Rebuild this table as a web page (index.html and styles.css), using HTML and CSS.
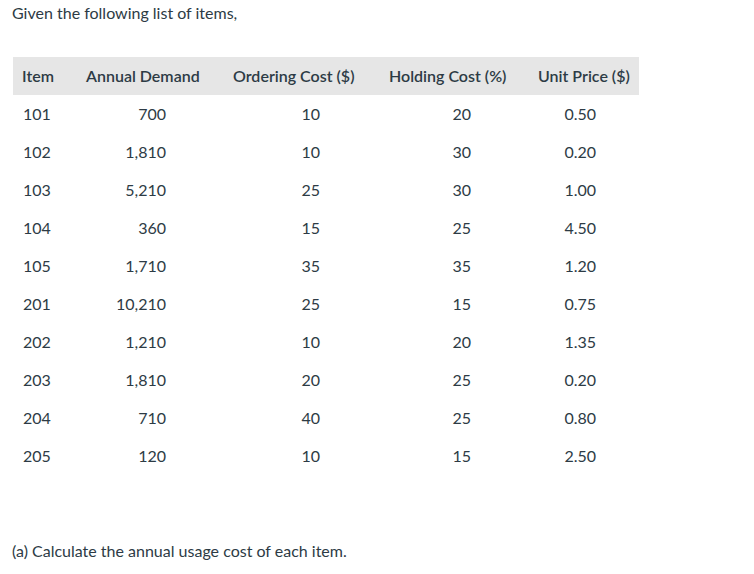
FILE: index.html
```html
<!DOCTYPE html>
<html>
<head>
<meta charset="utf-8">
<link rel="stylesheet" href="styles.css">
</head>
<body>
<div class="page">
  <p class="intro">Given the following list of items,</p>
  <table class="items">
    <colgroup>
      <col class="c1"><col class="c2"><col class="c3"><col class="c4"><col class="c5">
    </colgroup>
    <thead>
      <tr><th>Item</th><th>Annual Demand</th><th>Ordering Cost ($)</th><th>Holding Cost (%)</th><th>Unit Price ($)</th></tr>
    </thead>
    <tbody>
      <tr><td>101</td><td>700</td><td>10</td><td>20</td><td>0.50</td></tr>
      <tr><td>102</td><td>1,810</td><td>10</td><td>30</td><td>0.20</td></tr>
      <tr><td>103</td><td>5,210</td><td>25</td><td>30</td><td>1.00</td></tr>
      <tr><td>104</td><td>360</td><td>15</td><td>25</td><td>4.50</td></tr>
      <tr><td>105</td><td>1,710</td><td>35</td><td>35</td><td>1.20</td></tr>
      <tr><td>201</td><td>10,210</td><td>25</td><td>15</td><td>0.75</td></tr>
      <tr><td>202</td><td>1,210</td><td>10</td><td>20</td><td>1.35</td></tr>
      <tr><td>203</td><td>1,810</td><td>20</td><td>25</td><td>0.20</td></tr>
      <tr><td>204</td><td>710</td><td>40</td><td>25</td><td>0.80</td></tr>
      <tr><td>205</td><td>120</td><td>10</td><td>15</td><td>2.50</td></tr>
    </tbody>
  </table>
  <p class="question">(a) Calculate the annual usage cost of each item.</p>
</div>
</body>
</html>
```
FILE: styles.css
```css
html, body {
  margin: 0;
  padding: 0;
  background: #ffffff;
}
.page {
  padding: 1px 12px 0 12px;
  font-family: Lato, "Liberation Sans", sans-serif;
  font-size: 16px;
  line-height: 24px;
  color: #2d3b45;
}
.intro, .question {
  margin: 0;
}
.items {
  margin: 32px 0 0 1px;
  border-collapse: collapse;
  table-layout: fixed;
  width: 626px;
}
.c1 { width: 64px; }
.c2 { width: 147px; }
.c3 { width: 156px; }
.c4 { width: 149px; }
.c5 { width: 110px; }
.items th {
  background: #e6e6e6;
  height: 38px;
  padding: 0 0 0 9px;
  text-align: left;
  font-weight: 600;
  white-space: nowrap;
}
.items td {
  height: 38px;
  padding: 0;
  text-align: right;
}
.items td:nth-child(1) { text-align: left; padding-left: 10px; }
.items td:nth-child(2) { padding-right: 58px; }
.items td:nth-child(3) { padding-right: 60px; }
.items td:nth-child(4) { padding-right: 58px; }
.items td:nth-child(5) { padding-right: 43px; }
.question {
  margin-top: 64px;
}
```
